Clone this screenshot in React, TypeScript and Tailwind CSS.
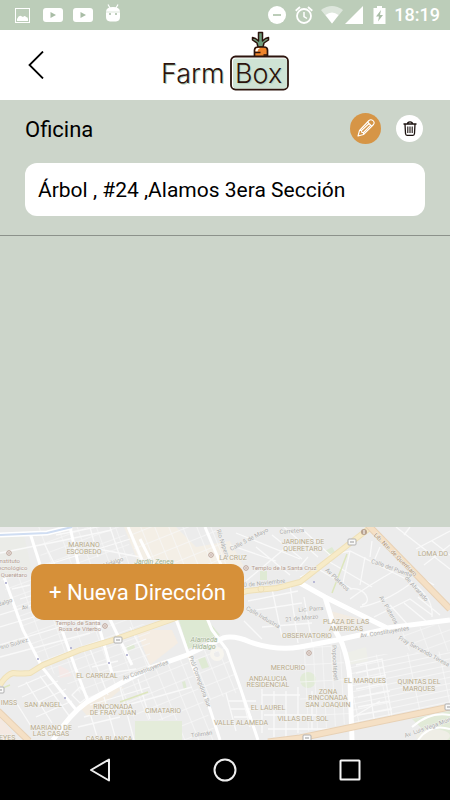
import React from "react";

type MapLabel = {
  x: number;
  y: number;
  text: string;
  rotate?: number;
};

const districts: MapLabel[] = [
  { x: 84, y: 20, text: "MARIANO" },
  { x: 84, y: 27, text: "ESCOBEDO" },
  { x: 233, y: 33, text: "LA CRUZ" },
  { x: 303, y: 17, text: "JARDINES DE" },
  { x: 303, y: 24, text: "QUERETARO" },
  { x: 433, y: 29, text: "LOMA DO" },
  { x: 346, y: 97, text: "PLAZA DE LAS" },
  { x: 346, y: 104, text: "AMERICAS" },
  { x: 307, y: 111, text: "OBSERVATORIO" },
  { x: 97, y: 151, text: "EL CARRIZAL" },
  { x: 9, y: 178, text: "IMSS" },
  { x: 43, y: 180, text: "SAN ANGEL" },
  { x: 113, y: 182, text: "RINCONADA" },
  { x: 113, y: 188, text: "DE FRAY JUAN" },
  { x: 163, y: 186, text: "CIMATARIO" },
  { x: 51, y: 203, text: "MARIANO DE" },
  { x: 51, y: 209, text: "LAS CASAS" },
  { x: 5, y: 213, text: "REYES" },
  { x: 109, y: 214, text: "CASA BLANCA" },
  { x: 288, y: 143, text: "MERCURIO" },
  { x: 268, y: 154, text: "ANDALUCIA" },
  { x: 268, y: 160, text: "RESIDENCIAL" },
  { x: 268, y: 183, text: "EL LAUREL" },
  { x: 241, y: 198, text: "VALLE ALAMEDA" },
  { x: 303, y: 194, text: "VILLAS DEL SOL" },
  { x: 328, y: 167, text: "ZONA" },
  { x: 328, y: 173, text: "RINCONADA" },
  { x: 328, y: 180, text: "SAN JOAQUIN" },
  { x: 365, y: 156, text: "EL MARQUES" },
  { x: 419, y: 157, text: "QUINTAS DEL" },
  { x: 419, y: 164, text: "MARQUES" },
];

const streets: MapLabel[] = [
  { x: 114, y: 37, text: "Hidalgo", rotate: -18 },
  { x: 250, y: 14, text: "Calle 5 de Mayo", rotate: -28 },
  { x: 221, y: 17, text: "Río Nápera", rotate: 72 },
  { x: 263, y: 58, text: "20 de Noviembre", rotate: -6 },
  { x: 262, y: 92, text: "Calle Industria", rotate: 30 },
  { x: 292, y: 6, text: "Carretera", rotate: -5 },
  { x: 336, y: 54, text: "Av Plateros", rotate: 44 },
  { x: 387, y: 84, text: "Av. Plateros", rotate: 60 },
  { x: 391, y: 43, text: "Calle del Puente", rotate: 20 },
  { x: 415, y: 63, text: "de Alvarado", rotate: 48 },
  { x: 311, y: 84, text: "Lic. Parra", rotate: -4 },
  { x: 302, y: 93, text: "21 de Marzo", rotate: -5 },
  { x: 13, y: 119, text: "Pino Suárez", rotate: -16 },
  { x: 146, y: 145, text: "Av Constituyentes", rotate: -20 },
  { x: 385, y: 107, text: "Av. Constituyentes", rotate: -9 },
  { x: 423, y: 126, text: "Fray Servando Teresa", rotate: 29 },
  { x: 198, y: 155, text: "Pról Corregidora Sur", rotate: 70 },
  { x: 333, y: 136, text: "Popocatépetl", rotate: 87 },
  { x: 202, y: 209, text: "Tolimán", rotate: -8 },
  { x: 432, y: 201, text: "Av. Luis Vega Monroy", rotate: -20 },
  { x: 26, y: 82, text: "Av.", rotate: -14 },
  { x: 3, y: 78, text: "Hidalgo", rotate: -20 },
];

const places: MapLabel[] = [
  { x: 9, y: 36, text: "Instituto" },
  { x: 11, y: 43, text: "Tecnológico" },
  { x: 10, y: 50, text: "de Querétaro" },
  { x: 78, y: 98, text: "Templo de Santa" },
  { x: 80, y: 104, text: "Rosa de Viterbo" },
  { x: 284, y: 43, text: "Templo de la Santa Cruz" },
];

const parks: MapLabel[] = [
  { x: 154, y: 37, text: "Jardín Zenea" },
  { x: 204, y: 115, text: "Alameda" },
  { x: 204, y: 122, text: "Hidalgo" },
];

const highways: MapLabel[] = [
  { x: 394, y: 29, text: "Lib. Nte. de Querétaro", rotate: 45 },
];

const pins = [
  [9, 26],
  [105, 99],
  [211, 28],
  [246, 41],
  [309, 126],
];

const mainRoads = [
  "M300 56L325 70L387 101L450 93",
  "M387 102L337 113L300 120Q276 124 250 115Q234 108 223 111L187 128L150 141L123 155L87 175Q70 187 53 213",
  "M325 70L335 103L342 116Q349 135 350 153L352 213",
];

const avenues = [
  "M194 60L212 103L227 123L240 160L258 213",
  "M164 60L180 103L193 140L208 176L220 213",
  "M4 50L23 103L42 140L77 184",
  "M40 50L62 103L75 140L88 174",
  "M70 0L78 36L100 103L112 146",
  "M104 80L120 113L132 138",
  "M30 6L42 44",
  "M128 0L143 35L160 70",
  "M140 12L158 48",
  "M205 0L224 45",
];

const lanes = [
  "M0 26L60 14L112 3M40 40L130 12M44 16L60 48M90 0L98 30M110 0L122 36M56 8L128 -6M98 22L140 30",
  "M0 88L70 66M0 100L74 78M0 118L100 88M0 130L90 106M6 50L20 46M12 62L30 58M20 72L34 68",
  "M18 160L46 148M22 170L58 154M28 180L66 162M36 190L72 174M26 155L52 196M40 149L70 190M14 172L34 204",
  "M92 140L118 134M96 148L136 142M116 110L142 104M122 122L146 112M90 122L108 168M130 100L150 140M72 168L80 160L88 170L80 176Z",
  "M90 178L150 160M84 190L192 160M78 200L120 190M104 170L116 213M120 160L134 213M138 152L150 192M90 186L98 213",
  "M300 50L318 42L352 62M318 42L330 28L350 24L410 54M328 34L372 60M350 24L342 60M365 30L360 58M372 14L370 30M380 20L374 34",
  "M350 72Q366 60 394 44M360 80Q384 76 410 57M374 90L410 72L432 88M390 78L408 98M404 76L426 94M418 70L440 88M350 62Q360 60 366 68Q370 76 362 78M410 54Q434 70 432 90",
  "M396 0L450 42M410 0L404 8M416 22L450 4M432 14L450 28M424 38L450 18M410 44L434 58",
  "M230 18L276 34M236 6L300 32M246 54L296 12M256 20L290 48M272 8L302 32M284 0L318 30M300 0L330 28M308 30L296 44",
  "M248 74L298 64M250 84L302 76M262 100L312 96M272 62L282 110M290 58L298 116M244 94L262 112M304 70L312 116",
  "M228 174H256M230 182H258M234 190H252M226 166L236 204M242 168L250 200M254 154H284M262 162V206M274 164V210M286 164V212M262 168H300M264 188H316M268 202H330M298 160V206M312 164V202",
  "M356 138L382 132L392 190M366 136L374 192M356 146L384 140M356 154L386 148M356 162L386 156M358 170L390 164M358 180L390 174M358 188L392 182M380 174L350 192",
];

const orangeRoads = ["M368 -2L450 82", "M-2 184L29 214", "M268 215L300 211L450 180"];

const yellowRoad = [
  "M371 0L300 55L277 61L247 64L170 93L113 113L80 123L43 138L30 146Q20 147 13 146Q6 148 0 158",
];

function pathList(paths: string[], width: number, color = "#ffffff") {
  return paths.map((d) => (
    <path key={d} d={d} fill="none" stroke={color} strokeWidth={width} />
  ));
}

function labelList(labels: MapLabel[], color: string, size: number) {
  return labels.map((l) => (
    <text
      key={l.text + l.x + l.y}
      transform={`translate(${l.x} ${l.y}) rotate(${l.rotate ?? 0})`}
      textAnchor="middle"
      fontSize={size}
      fill={color}
      stroke="#f3f3f1"
      strokeWidth="1"
      paintOrder="stroke"
    >
      {l.text}
    </text>
  ));
}

function CityMap() {
  return (
    <svg
      className="absolute inset-0 h-full w-full font-[Roboto,sans-serif]"
      viewBox="0 0 450 213"
      preserveAspectRatio="xMidYMid slice"
      aria-hidden="true"
    >
      <defs>
        <pattern id="blocksWest" width="18" height="10" patternUnits="userSpaceOnUse" patternTransform="rotate(-20)">
          <path d="M0 0H18M0 0V10" stroke="#f6f6f6" strokeWidth="1.4" fill="none" />
        </pattern>
        <pattern id="blocksCenter" width="13" height="14" patternUnits="userSpaceOnUse" patternTransform="rotate(-22)">
          <path d="M0 0H13M0 0V14" stroke="#f8f8f8" strokeWidth="1.5" fill="none" />
        </pattern>
        <pattern id="blocksEast" width="31" height="6" patternUnits="userSpaceOnUse" patternTransform="rotate(-12)">
          <path d="M0 0H31M0 0V6" stroke="#f9f9f9" strokeWidth="1.5" fill="none" />
        </pattern>
        <pattern id="blocksSouth" width="9" height="17" patternUnits="userSpaceOnUse" patternTransform="rotate(-3)">
          <path d="M0 0H9M0 0V17" stroke="#f8f8f8" strokeWidth="1.3" fill="none" />
        </pattern>
      </defs>

      <rect width="450" height="213" fill="#ececec" />
      <path d="M0 10L24 8L32 44L0 52Z" fill="#ebece8" />
      <path d="M124 0H176L196 20L230 14L244 40H140Z" fill="#f4efe6" />
      <path d="M136 103H172L178 116L150 138Z" fill="#f5ede3" />
      <path d="M330 84L360 92L344 102L330 100Z" fill="#f3ece2" />
      <path d="M58 138L68 143L72 149L60 151Z" fill="#f5e9e7" />
      <path d="M78 178L108 162L124 160L88 190Z" fill="#f3ece2" />
      <path d="M0 190L18 213H0Z" fill="#f4e9e2" />
      <path d="M178 90H205L220 108L188 122Z" fill="#dde9d3" />
      <path d="M135 194H182V213H135Z" fill="#e4ecda" />
      <path d="M198 132L205 130L209 140L202 142ZM182 155L185 154L187 162L184 163ZM260 44H267V53H260ZM325 24L332 20L335 25L328 28ZM126 119L134 117L135 121L128 124Z" fill="#dfead4" />
      <circle cx="308" cy="153" r="8" fill="#e2ebd8" />
      <path d="M346 126L366 120L368 134L349 138Z" fill="#eeefe9" />
      <path d="M412 192L450 184V213H434Z" fill="#e1ead7" />
      <ellipse cx="433" cy="209" rx="17" ry="7" fill="#efeee6" />

      <path d="M0 50L40 50L150 100V138L123 154L88 172L42 138L20 100Z" fill="url(#blocksWest)" />
      <path d="M34 0H122L140 44H44Z" fill="url(#blocksWest)" />
      <path d="M128 0H220L236 44H140Z" fill="url(#blocksCenter)" />
      <path d="M152 142L186 130L218 213H182V193H135L120 160Z" fill="url(#blocksCenter)" />
      <path d="M192 128L222 113L240 165L208 174Z" fill="url(#blocksCenter)" />
      <path d="M346 136L368 128L450 124V178L354 198Z" fill="url(#blocksEast)" />
      <path d="M390 104L450 96V124L412 126Z" fill="url(#blocksWest)" />
      <path d="M300 122L338 116L348 150L350 196L300 206Z" fill="url(#blocksSouth)" />

      {pathList(lanes, 1.3, "#f9f9f9")}
      <path d="M347 27L332 66M0 162L10 158M120 175L148 165" stroke="#dde6bd" strokeWidth="1.5" />
      {pathList(avenues, 3)}
      {pathList(mainRoads, 5)}
      <circle cx="217" cy="127" r="5" fill="none" stroke="#f7f5ef" strokeWidth="4" />

      <path d="M0 8L47 6L72 0" fill="none" stroke="#ffffff" strokeWidth="5" />
      <path d="M0 8L47 6L72 0" fill="none" stroke="#cfddf2" strokeWidth="2" />

      {pathList(yellowRoad, 6, "#eee0b8")}
      {pathList(yellowRoad, 4, "#f7ebc8")}
      <circle cx="261" cy="62" r="3" fill="#f7ebc8" stroke="#eee0b8" />
      {pathList(orangeRoads, 7, "#e8d1b5")}
      {pathList(orangeRoads, 5, "#f5e0c5")}
      <path d="M412 200Q430 184 450 188M418 213Q430 196 450 202" fill="none" stroke="#ffffff" strokeWidth="2" />

      {labelList(streets, "#acacac", 6)}
      {labelList(districts, "#b7aa8c", 7)}
      {labelList(places, "#b39c91", 6)}
      <g fontStyle="italic">{labelList(parks, "#9fb48f", 7)}</g>
      {labelList(highways, "#b09070", 6)}

      {pins.map(([cx, cy]) => (
        <g key={cx}>
          <circle cx={cx} cy={cy} r="2.3" fill="#f4eeea" stroke="#b9a196" />
          <path d={`M${cx - 1} ${cy}h2`} stroke="#b9a196" />
        </g>
      ))}
      <circle cx="364" cy="5" r="3" fill="#b7a18f" />
      <path d="M364 3v4" stroke="#ffffff" />
      {[
        [352, 15],
        [118, 113],
        [307, 211],
        [449, 180],
        [0, 163],
      ].map(([x, y]) => (
        <g key={x}>
          <rect x={x - 4} y={y - 3} width="8" height="6" rx="1" fill="#fafafa" stroke="#b0b0b0" />
          <path d={`M${x - 2} ${y}h4`} stroke="#999999" />
        </g>
      ))}
      <path d="M6 55v2M38 131v2M71 120v2M109 135v2M127 127v2M65 170v2M314 54v2" stroke="#b9b9d6" strokeWidth="2" />
    </svg>
  );
}

function YoutubeBadge() {
  return (
    <svg className="h-[14px] w-5" viewBox="0 0 20 14" aria-hidden="true">
      <rect width="20" height="14" rx="3" fill="#ffffff" />
      <path d="M7.5 4L13 7L7.5 10Z" fill="#a9bda6" />
    </svg>
  );
}

function StatusBar() {
  return (
    <div className="flex h-[30px] shrink-0 items-center justify-between bg-[#bccdb9] pr-[10px] pl-[15px]">
      <div className="flex items-center">
        <svg className="mr-[13px] h-[15px] w-[15px]" viewBox="0 0 15 15" aria-hidden="true">
          <rect x="0.5" y="0.5" width="14" height="14" fill="none" stroke="#ffffff" />
          <path d="M2 13V11Q4 7 6 8L8 9Q10 7 11 9Q13 9 13 11V13Z" fill="#ffffff" />
        </svg>
        <div className="mr-3 flex gap-[10px]">
          <YoutubeBadge />
          <YoutubeBadge />
        </div>
        <svg className="mb-1 h-[18px] w-4" viewBox="0 0 16 18" aria-hidden="true">
          <path d="M3 0.500L5 4M13 0.500L11 4" stroke="#ffffff" strokeWidth="1.2" />
          <path d="M1 8Q1 3 8 3Q15 3 15 8V13Q15 17 11 17.5H5Q1 17 1 13Z" fill="#ffffff" />
          <path d="M1 8H15" stroke="#dfe8dd" />
          <path d="M4 10h2M10 10h2" stroke="#a9bda6" strokeWidth="1.6" />
        </svg>
      </div>
      <div className="flex items-center">
        <svg className="mr-[9px] h-[18px] w-[18px]" viewBox="0 0 18 18" aria-hidden="true">
          <circle cx="9" cy="9" r="9" fill="#ffffff" />
          <path d="M5 9H13" stroke="#bccdb9" strokeWidth="2" />
        </svg>
        <svg className="mr-2 h-[18px] w-[18px]" viewBox="0 0 18 18" fill="none" stroke="#ffffff" aria-hidden="true">
          <circle cx="9" cy="10" r="7" strokeWidth="1.8" />
          <path d="M9 6V10.5L12 12.5" strokeWidth="1.5" />
          <path d="M0.7 4.7L5 1M17.3 4.7L13 1" strokeWidth="1.8" />
        </svg>
        <svg className="mr-[2px] h-[18px] w-[22px]" viewBox="0 0 22 18" aria-hidden="true">
          <path d="M0 4Q11 -4 22 4L11 17.5Z" fill="#dde6dc" />
          <path d="M4.5 9Q11 4 17.5 9L11 17.5Z" fill="#ffffff" />
        </svg>
        <svg className="mr-[10px] h-[18px] w-[18px]" viewBox="0 0 18 18" aria-hidden="true">
          <path d="M18 0V18H0Z" fill="#ffffff" />
        </svg>
        <svg className="mr-2 h-[18px] w-[13px]" viewBox="0 0 13 18" aria-hidden="true">
          <path d="M4 0H9V2H12.5V18H0.5V2H4Z" fill="#ffffff" />
          <path d="M8 4L3 10.5H6L5 15.5L10 9H7Z" fill="#a9bda6" />
        </svg>
        <span className="text-[18px] leading-[30px] font-medium text-white">18:19</span>
      </div>
    </div>
  );
}

function Logo() {
  return (
    <svg className="h-[62px] w-[132px] font-[Inter,sans-serif]" viewBox="0 0 132 62" role="img" aria-label="Farm Box">
      <g stroke="#2c140d" strokeLinejoin="round">
        <path d="M99 17L98 13L93.500 10V7.500L96.500 8.500L99.500 11V2.500H103.500V11L106.500 8.500L109.500 7.500V10L105 13L104 17Z" fill="#6f9c7c" strokeWidth="1.500" />
        <path d="M95.500 27V20Q95.500 17 99 17H105Q108.500 17 108.500 20V27Z" fill="#ee842c" strokeWidth="1.700" />
        <path d="M96.500 21.500V20Q96.500 18 99 18H101Q98.500 19 98.500 21.500Z" fill="#ffffff" stroke="none" />
        <path d="M96 22.500H101.500M104.500 25H108" strokeWidth="1.300" />
      </g>
      <rect x="72" y="26.500" width="57" height="33" rx="4.500" fill="#ffffff" stroke="#2c140d" strokeWidth="1.800" />
      <rect x="74" y="28.500" width="54" height="30" rx="3" fill="#cfe3d4" />
      <g fontSize="27" fontWeight="300">
        <g fill="#b8d2be">
          <text x="3" y="54">Farm</text>
          <text x="77" y="54">Box</text>
        </g>
        <g fill="#2c140d">
          <text x="2" y="53">Farm</text>
          <text x="76" y="53">Box</text>
        </g>
      </g>
    </svg>
  );
}

function Header() {
  return (
    <header className="grid h-[70px] shrink-0 grid-cols-[1fr_auto_1fr] items-start bg-white">
      <button type="button" aria-label="Volver" className="ml-[22px] flex h-[70px] w-7 items-center justify-center">
        <svg className="h-7 w-4" viewBox="0 0 16 28" fill="none" stroke="#000000" strokeWidth="1.800" aria-hidden="true">
          <path d="M15 0.500L1.500 14L15 27.500" />
        </svg>
      </button>
      <Logo />
      <span />
    </header>
  );
}

function PencilIcon() {
  return (
    <svg className="h-[18px] w-[18px]" viewBox="0 0 18 18" fill="none" stroke="#ffffff" strokeWidth="1.100" strokeLinejoin="round" aria-hidden="true">
      <path d="M1 17L2.500 11.500L12 1.500Q14 0 16 1.700Q18 3.500 16.500 5.500L6.500 15.500Z" />
      <path d="M2.500 11.500L4.500 11.500L4.800 13.500L6.500 13.500V15.500M10.500 3L15 7.300M4.500 11.500L12 4.500M6.500 13.500L13.700 6.200" />
    </svg>
  );
}

function TrashIcon() {
  return (
    <svg className="h-[15px] w-[14px]" viewBox="0 0 14 15" fill="none" stroke="#1c1310" strokeWidth="1.300" aria-hidden="true">
      <path d="M0.500 3H13.500M4.500 3Q4.500 0.800 7 0.800Q9.500 0.800 9.500 3M2 3L2.500 12.500Q2.700 14.300 4 14.300H10Q11.300 14.300 11.500 12.500L12 3" />
      <path d="M4.800 5.500V12M7 5.500V12M9.200 5.500V12" strokeWidth="1.100" />
    </svg>
  );
}

function AddressItem() {
  return (
    <article className="border-b border-[#8c928b] px-[25px] pt-3 pb-[19px]">
      <div className="flex items-center justify-between">
        <h2 className="pt-[3px] text-[22px] leading-[29px]">Oficina</h2>
        <div className="flex items-center gap-[15px] pr-[2px]">
          <button type="button" aria-label="Editar dirección" className="flex h-8 w-[31px] items-center justify-center">
            <span className="flex h-[31px] w-[31px] items-center justify-center rounded-full bg-[#d69546]">
              <PencilIcon />
            </span>
          </button>
          <button type="button" aria-label="Eliminar dirección" className="flex h-[27px] w-[27px] items-center justify-center rounded-full bg-white">
            <TrashIcon />
          </button>
        </div>
      </div>
      <p className="mt-[19px] rounded-xl bg-white px-[13px] pt-[13px] pb-[11px] text-[21px] leading-[29px]">
        Árbol , #24 ,Alamos 3era Sección
      </p>
    </article>
  );
}

function SystemNav() {
  return (
    <nav className="flex h-[60px] shrink-0 items-center justify-center gap-[101px] bg-black">
      <button type="button" aria-label="Atrás" className="flex h-6 w-6 items-center justify-center">
        <svg className="h-6 w-6" viewBox="0 0 24 24" fill="none" stroke="#eeeeee" strokeWidth="2" strokeLinejoin="round" aria-hidden="true">
          <path d="M21 1.500V22.500L3 12Z" />
        </svg>
      </button>
      <button type="button" aria-label="Inicio" className="flex h-6 w-6 items-center justify-center">
        <svg className="h-6 w-6" viewBox="0 0 24 24" fill="none" stroke="#eeeeee" strokeWidth="2" aria-hidden="true">
          <circle cx="12" cy="12" r="10.500" />
        </svg>
      </button>
      <button type="button" aria-label="Recientes" className="flex h-6 w-6 items-center justify-center">
        <svg className="h-6 w-6" viewBox="0 0 24 24" fill="none" stroke="#f5f5f5" strokeWidth="2" aria-hidden="true">
          <rect x="2.500" y="2.500" width="19" height="19" rx="0.500" />
        </svg>
      </button>
    </nav>
  );
}

export default function App() {
  return (
    <div className="flex min-h-screen flex-col bg-[#ccd5ca] font-[Roboto,sans-serif] text-black">
      <StatusBar />
      <Header />
      <main className="flex flex-1 flex-col">
        <section className="flex-1">
          <AddressItem />
        </section>
        <section className="relative h-[213px] overflow-hidden">
          <CityMap />
          <div className="relative px-[31px] pt-[37px]">
            <button type="button" className="rounded-[13px] bg-[#d69039] px-[18px] pt-[14px] pb-[13px] text-[22px] leading-[29px] text-white">
              + Nueva Dirección
            </button>
          </div>
        </section>
      </main>
      <SystemNav />
    </div>
  );
}
